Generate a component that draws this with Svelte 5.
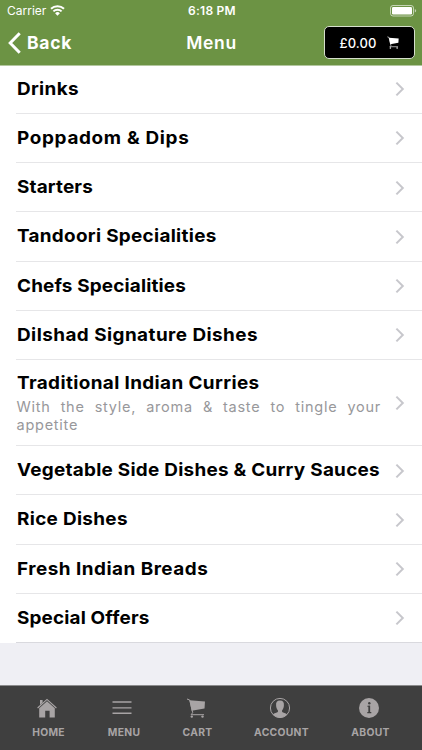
<script>
	const categories = [
		{ name: 'Drinks', spacing: 0.3 },
		{ name: 'Poppadom & Dips', spacing: 0.64 },
		{ name: 'Starters', spacing: 0.15 },
		{ name: 'Tandoori Specialities', spacing: 0.28 },
		{ name: 'Chefs Specialities', spacing: 0.15 },
		{ name: 'Dilshad Signature Dishes', spacing: 0.42 },
		{
			name: 'Traditional Indian Curries',
			description: 'With the style, aroma & taste to tingle your appetite',
			spacing: 0.36,
		},
		{ name: 'Vegetable Side Dishes & Curry Sauces', spacing: 0.25 },
		{ name: 'Rice Dishes', spacing: 0.3 },
		{ name: 'Fresh Indian Breads', spacing: 0.46 },
		{ name: 'Special Offers', spacing: 0.15 },
	];

	const tabs = [
		{ label: 'HOME', icon: 'home', width: 33 },
		{ label: 'MENU', icon: 'menu', width: 33 },
		{ label: 'CART', icon: 'cart', width: 29 },
		{ label: 'ACCOUNT', icon: 'account', width: 54 },
		{ label: 'ABOUT', icon: 'about', width: 39 },
	];

	let total = $state(0);
</script>

{#snippet cartIcon()}
	<path d="M.5 1 3.2 2 6.2 14.7 4.6 16.7H17.5" fill="none" stroke="currentColor" stroke-width="1" />
	<path d="M3 2.3 18.5 3.6 18 10.4 5.2 12.7Z" />
	<circle cx="5.3" cy="18.6" r="1.2" />
	<circle cx="16" cy="18.6" r="1.2" />
{/snippet}

<div class="screen">
	<header>
		<div class="status">
			<div class="carrier">
				<span>Carrier</span>
				<svg width="15" height="11" viewBox="0 0 15 11" fill="none" stroke="#fff" stroke-width="2">
					<path d="M1 3.8a9.4 9.4 0 0 1 13 0" />
					<path d="M3.4 6.4a5.9 5.9 0 0 1 8.2 0" />
					<path d="M7.5 10.7 5.1 8.3a3.4 3.4 0 0 1 4.8 0Z" fill="#fff" stroke="none" />
				</svg>
			</div>
			<span class="time">6:18 PM</span>
			<svg class="battery" width="27" height="12" viewBox="0 0 27 12">
				<rect x=".5" y=".5" width="23" height="10.5" rx="2.5" fill="none" stroke="#fff" stroke-opacity=".6" />
				<rect x="2" y="2" width="20" height="7.5" rx="1.2" fill="#fff" />
				<path d="M24.8 4v3.6q1.4-.7 1.4-1.8T24.8 4Z" fill="#fff" fill-opacity=".6" />
			</svg>
		</div>
		<nav>
			<button class="back">
				<svg width="13" height="22" viewBox="0 0 13 22" fill="none" stroke="#fff" stroke-width="3">
					<path d="M11.7 1.2 2.2 11l9.5 9.8" />
				</svg>
				<span>Back</span>
			</button>
			<h1>Menu</h1>
			<button class="basket">
				<span>£{total.toFixed(2)}</span>
				<svg width="12" height="13" viewBox="0 0 19 20" fill="currentColor">
					{@render cartIcon()}
				</svg>
			</button>
		</nav>
	</header>

	<ul>
		{#each categories as { name, description, spacing }}
			<li class:tall={description}>
				<div class="text">
					<h2 style="letter-spacing: {spacing}px">{name}</h2>
					{#if description}
						<p>{description}</p>
					{/if}
				</div>
				<svg width="10" height="16" viewBox="0 0 10 16" fill="none" stroke="#c7c7cc" stroke-width="2">
					<path d="M1.4 1.6 7.8 8l-6.4 6.4" />
				</svg>
			</li>
		{/each}
	</ul>

	<footer>
		{#each tabs as { label, icon, width }}
			<button class="tab" style="width: {width}px">
				<svg width="22" height="22" viewBox="0 0 22 22" fill="currentColor">
					{#if icon == 'home'}
						<path d="M1.6 11 11 2.4 20.4 11" fill="none" stroke="currentColor" stroke-width="1.1" />
						<path d="M4 3h2.6v2.6L4 8Z" />
						<path d="M3.2 11.2 11 4.3l7.8 6.9V20.4H13.6v-6.6H9.2v6.6H3.2Z" />
					{:else if icon == 'menu'}
						<path d="M1.5 5h19M1.5 10.9h19M1.5 16.2h19" stroke="currentColor" stroke-width="1.4" />
					{:else if icon == 'cart'}
						<g transform="translate(1.5 1)">{@render cartIcon()}</g>
					{:else if icon == 'account'}
						<circle cx="11" cy="11" r="9.6" fill="none" stroke="currentColor" stroke-width="1" />
						<path d="M11 3.6c-3 0-4.2 2-3.9 4.8.1 2.2.8 3.8 1.8 4.8v1.9c-1 .9-3.7 1.1-5 2.4A9.8 9.8 0 0 0 11 20.7a9.8 9.8 0 0 0 7.1-3.2c-1.3-1.3-4-1.5-5-2.4v-1.9c1-1 1.7-2.6 1.8-4.8.3-2.8-.9-4.8-3.9-4.8Z" />
					{:else}
						<circle cx="11" cy="11" r="10" />
						<path d="M9.4 9.3h1.9v6M9.3 15.6h4" fill="none" stroke="#3f3f3f" stroke-width="1.1" />
						<path d="M11.3 8.7v7" stroke="#3f3f3f" stroke-width="1.7" />
						<circle cx="11.3" cy="6.3" r="1.2" fill="#3f3f3f" />
					{/if}
				</svg>
				<span>{label}</span>
			</button>
		{/each}
	</footer>
</div>

<style>
	:global(body) {
		margin: 0;
	}
	.screen {
		display: flex;
		flex-direction: column;
		height: 750px;
		overflow: hidden;
		background: #efeff4;
		font-family: Inter, 'Liberation Sans', sans-serif;
	}
	button {
		margin: 0;
		padding: 0;
		border: 0;
		background: none;
		color: inherit;
		font: inherit;
	}
	h1, h2, p, ul {
		margin: 0;
		padding: 0;
	}
	svg {
		display: block;
		flex: none;
	}
	header {
		box-sizing: border-box;
		height: 66px;
		flex: none;
		background: #6c9344;
		border-bottom: 1px solid #b3c79f;
		color: #fff;
	}
	.status {
		display: grid;
		grid-template-columns: 1fr auto 1fr;
		align-items: center;
		height: 21px;
		padding: 0 5px 0 7px;
		font-size: 12px;
	}
	.carrier {
		display: flex;
		align-items: center;
		gap: 4px;
	}
	.time {
		font-weight: 600;
		letter-spacing: 0.25px;
	}
	.battery {
		justify-self: end;
	}
	nav {
		display: grid;
		grid-template-columns: 1fr auto 1fr;
		align-items: center;
		height: 43px;
		padding: 0 7px 0 8px;
	}
	.back {
		display: flex;
		align-items: center;
		gap: 6px;
		font-size: 17.5px;
		font-weight: 700;
		letter-spacing: 0.7px;
	}
	h1 {
		font-size: 17.5px;
		font-weight: 600;
		letter-spacing: 0.7px;
	}
	.basket {
		display: flex;
		align-items: center;
		justify-self: end;
		justify-content: center;
		gap: 11px;
		box-sizing: border-box;
		width: 91px;
		height: 33px;
		border: 1px solid #d5dfcc;
		border-radius: 5px;
		background: #000;
		font-size: 13px;
		font-weight: 500;
		letter-spacing: 0.1px;
	}
	ul {
		flex: none;
		background: #fff;
		list-style: none;
	}
	li {
		display: flex;
		align-items: center;
		box-sizing: border-box;
		height: 49.25px;
		margin-left: 16px;
		padding: 0 17px 0 0.5px;
		border-bottom: 1px solid #e6e6e8;
	}
	li:first-child {
		height: 47.75px;
		padding-bottom: 1px;
	}
	li:last-child {
		border-color: #d9d9de;
	}
	li.tall {
		height: 86px;
	}
	.text {
		flex: 1;
		min-width: 0;
	}
	/* the heading face is set slightly wide */
	h2 {
		font-size: 18px;
		font-weight: 700;
		line-height: 24px;
		color: #000;
		white-space: nowrap;
		transform: scaleX(1.05);
		transform-origin: 0 50%;
	}
	li > svg {
		margin-top: 1px;
	}
	p {
		width: 364.5px;
		padding-top: 3px;
		font-size: 14.5px;
		line-height: 18px;
		letter-spacing: 0.75px;
		color: #98989b;
		text-align: justify;
	}
	footer {
		display: flex;
		justify-content: space-between;
		box-sizing: border-box;
		height: 65px;
		flex: none;
		margin-top: auto;
		padding: 11px 32px 0;
		border-top: 1px solid #8b8b8c;
		background: #3f3f3f;
		color: #a8a4a5;
	}
	.tab {
		display: flex;
		flex-direction: column;
		align-items: center;
		gap: 5px;
		font-size: 10.3px;
		font-weight: 700;
		line-height: 16px;
		letter-spacing: 0.3px;
	}
	.tab svg {
		margin-right: 4px;
	}
</style>
